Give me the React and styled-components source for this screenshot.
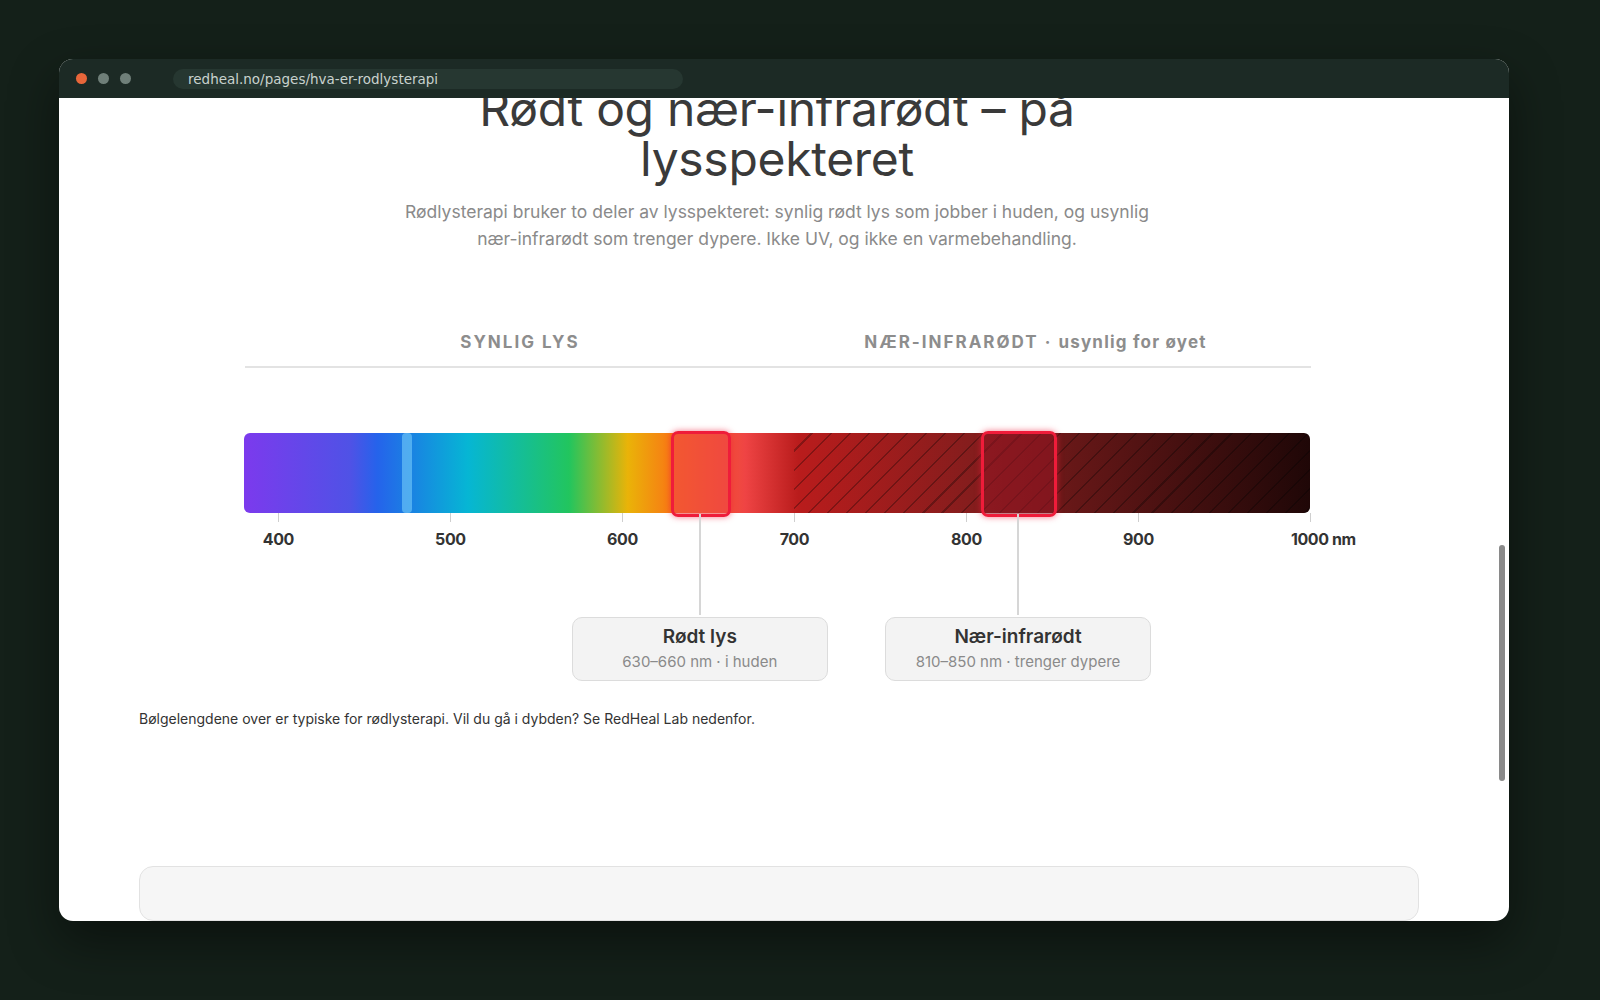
import React from 'react';
import styled, { createGlobalStyle } from 'styled-components';

const Global = createGlobalStyle`
  html, body { margin: 0; background: #142019; font-family: Inter, "Noto Sans", sans-serif; }
`;

// nm -> px within the bar (bar starts at 380nm, 1.72px per nm)
const X = (nm) => (nm - 380) * 1.72;

const Stage = styled.div`
  width: 1600px;
  height: 1000px;
  padding: 59px 0 0 59px;
  box-sizing: border-box;
`;

const Window = styled.div`
  width: 1450px;
  height: 862px;
  border-radius: 14px;
  overflow: hidden;
  background: #fff;
  display: flex;
  flex-direction: column;
  box-shadow: 0 20px 50px rgba(0, 0, 0, 0.45);
`;

const TitleBar = styled.div`
  height: 39px;
  background: #1c2a25;
  display: flex;
  align-items: center;
  padding-left: 17px;
  gap: 11px;
  flex-shrink: 0;
`;

const Dot = styled.span`
  width: 11px;
  height: 11px;
  border-radius: 50%;
  background: ${(p) => p.$c};
`;

const Url = styled.div`
  margin-left: 31px;
  width: 510px;
  height: 20px;
  border-radius: 10px;
  background: #263731;
  color: #c9d2ce;
  font-family: "DejaVu Sans", sans-serif;
  font-size: 13.5px;
  line-height: 20px;
  padding-left: 15px;
  box-sizing: border-box;
`;

const Body = styled.div`
  flex: 1;
  display: flex;
  overflow: hidden;
`;

const Page = styled.div`
  flex: 1;
  display: flex;
  flex-direction: column;
  align-items: center;
  margin-top: -14px;
`;

const Scrollbar = styled.div`
  width: 14px;
  display: flex;
  justify-content: center;
  padding-top: 447px;
  & > div {
    width: 6px;
    height: 236px;
    border-radius: 3px;
    background: #8a8a8a;
  }
`;

const Title = styled.h1`
  margin: 0;
  font-weight: 400;
  font-size: 48px;
  line-height: 50px;
  color: #3a3a3a;
  text-align: center;
  letter-spacing: -0.3px;
`;

const Lead = styled.p`
  margin: 14px 0 0;
  width: 760px;
  text-align: center;
  color: #8a8a8a;
  font-size: 17.5px;
  line-height: 27px;
`;

const Headers = styled.div`
  margin-top: 80px;
  width: 1031px;
  margin-left: 2px;
  display: grid;
  grid-template-columns: 480px 1fr;
  padding-left: 35px;
  padding-bottom: 14px;
  border-bottom: 2px solid #e3e3e3;
`;

const Head = styled.div`
  text-align: center;
  color: #8d8d8d;
  font-weight: 700;
  font-size: 17px;
  letter-spacing: 2px;
  & > span { letter-spacing: 1.2px; }
`;

const Chart = styled.div`
  position: relative;
  margin-top: 65px;
  width: 1066px;
  height: 270px;
`;

const Bar = styled.div`
  position: relative;
  height: 80px;
  border-radius: 6px;
  overflow: hidden;
  background: linear-gradient(90deg, #7c3aed 0%, #4f52e6 10%, #2563eb 12.5%, #06b6d4 21%, #22c55e 30.5%, #eab308 36%, #f97316 40.5%, #ef4444 47%, #b91c1c 52%, #7f1d1d 70%, #1f0707 100%);
`;

const Hatch = styled.div`
  position: absolute;
  top: 0;
  bottom: 0;
  right: 0;
  left: ${X(700)}px;
  background: repeating-linear-gradient(135deg, transparent 0 12px, rgba(0, 0, 0, 0.28) 12px 13.5px);
`;

const Marker = styled.div`
  position: absolute;
  top: 0;
  bottom: 0;
  width: 10px;
  border-radius: 4px;
  background: rgba(125, 211, 252, 0.55);
`;

const Band = styled.div`
  position: absolute;
  top: -2px;
  height: 80px;
  border: 3px solid #ef1c3a;
  border-radius: 7px;
  box-shadow: 0 0 6px rgba(239, 28, 58, 0.6);
  background: ${(p) => p.$bg};
`;

const Tick = styled.div`
  position: absolute;
  top: 80px;
  width: 1px;
  height: 9px;
  background: #cfcfcf;
  & > span {
    position: absolute;
    top: 16px;
    left: 0;
    transform: translateX(-50%);
    font-weight: 700;
    font-size: 16px;
    color: #333;
    white-space: nowrap;
    letter-spacing: -0.4px;
  }
`;

const Stem = styled.div`
  position: absolute;
  top: 81px;
  width: 2px;
  height: 101px;
  background: #d6d6d6;
`;

const Callout = styled.div`
  position: absolute;
  top: 184px;
  height: 64px;
  transform: translateX(-50%);
  box-sizing: border-box;
  border: 1px solid #dcdcdc;
  border-radius: 10px;
  background: #f3f3f3;
  text-align: center;
  padding-top: 7px;
  & b { display: block; font-size: 19px; color: #333; font-weight: 600; line-height: 24px; }
  & small { display: block; font-size: 15px; color: #8a8a8a; margin-top: 3px; }
`;

const Note = styled.p`
  align-self: stretch;
  margin: 40px 0 0 80px;
  font-size: 14px;
  color: #333;
`;

const Card = styled.div`
  align-self: stretch;
  margin: 139px 76px 0 80px;
  height: 60px;
  border: 1px solid #e2e2e2;
  border-radius: 14px;
  background: #f6f6f6;
`;

const ticks = [400, 500, 600, 700, 800, 900, 1000];

export default function App() {
  return (
    <Stage>
      <Global />
      <Window>
        <TitleBar>
          <Dot $c="#e8663a" />
          <Dot $c="#6f7f79" />
          <Dot $c="#6f7f79" />
          <Url>redheal.no/pages/hva-er-rodlysterapi</Url>
        </TitleBar>
        <Body>
          <Page>
            <Title>Rødt og nær-infrarødt – på<br />lysspekteret</Title>
            <Lead>
              Rødlysterapi bruker to deler av lysspekteret: synlig rødt lys som jobber i huden, og usynlig nær-infrarødt som trenger dypere. Ikke UV, og ikke en varmebehandling.
            </Lead>
            <Headers>
              <Head>SYNLIG LYS</Head>
              <Head>NÆR-INFRARØDT · <span>usynlig for øyet</span></Head>
            </Headers>
            <Chart>
              <Bar>
                <Hatch />
                <Marker style={{ left: X(475) - 5 }} />
              </Bar>
              <Band $bg="rgba(239,68,68,0.6)" style={{ left: X(630) - 3, width: X(660) - X(630) + 2 }} />
              <Band $bg="rgba(150,20,35,0.55)" style={{ left: X(810) - 3, width: X(850) - X(810) + 2 }} />
              {ticks.map((t) => (
                <Tick key={t} style={{ left: X(t) }}>
                  <span style={t === 1000 ? { transform: 'translateX(-30%)' } : undefined}>
                    {t === 1000 ? '1000 nm' : t}
                  </span>
                </Tick>
              ))}
              <Stem style={{ left: X(645) - 1 }} />
              <Stem style={{ left: X(830) - 1 }} />
              <Callout style={{ left: X(645), width: 256 }}>
                <b>Rødt lys</b>
                <small>630–660 nm · i huden</small>
              </Callout>
              <Callout style={{ left: X(830), width: 266 }}>
                <b>Nær-infrarødt</b>
                <small>810–850 nm · trenger dypere</small>
              </Callout>
            </Chart>
            <Note>Bølgelengdene over er typiske for rødlysterapi. Vil du gå i dybden? Se RedHeal Lab nedenfor.</Note>
            <Card />
          </Page>
          <Scrollbar><div /></Scrollbar>
        </Body>
      </Window>
    </Stage>
  );
}
